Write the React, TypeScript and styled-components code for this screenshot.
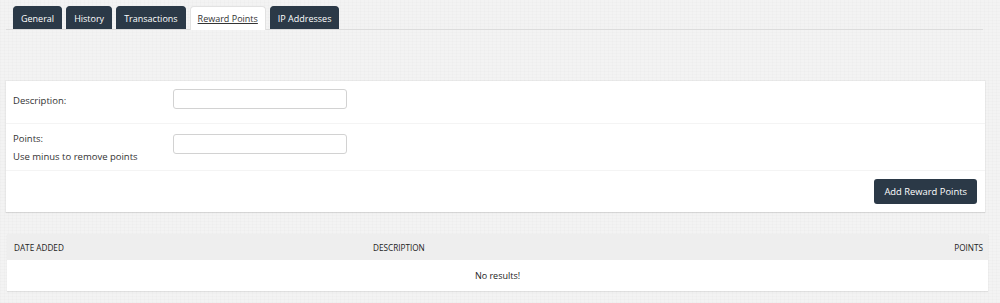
import React from "react";
import styled, { createGlobalStyle } from "styled-components";

const GlobalStyle = createGlobalStyle`
  html, body {
    margin: 0;
    padding: 0;
  }
  body {
    font-family: 'Open Sans', 'Liberation Sans', sans-serif;
    color: #333;
    background-color: #f3f3f3;
    background-image:
      repeating-linear-gradient(0deg, rgba(0,0,0,0.012) 0px, rgba(0,0,0,0.012) 1px, transparent 1px, transparent 3px),
      repeating-linear-gradient(90deg, rgba(0,0,0,0.012) 0px, rgba(0,0,0,0.012) 1px, transparent 1px, transparent 4px);
  }
`;

const Page = styled.div`
  width: 1000px;
  height: 303px;
  box-sizing: border-box;
  padding: 6px 15px 0 6px;
  overflow: hidden;
`;

const TabBar = styled.ul`
  display: flex;
  gap: 4px;
  margin: 0 2px 0 0;
  padding: 0 0 0 7px;
  list-style: none;
  border-bottom: 1px solid #dcdcdc;
`;

const Tab = styled.li<{ $active?: boolean }>`
  height: ${(p) => (p.$active ? "23px" : "22px")};
  padding: 0 7px;
  display: flex;
  align-items: center;
  border-radius: 4px 4px 0 0;
  font-size: 9px;
  background: ${(p) => (p.$active ? "#ffffff" : "#2b3947")};
  color: ${(p) => (p.$active ? "#333" : "#fff")};
  text-decoration: ${(p) => (p.$active ? "underline" : "none")};
  border: 1px solid ${(p) => (p.$active ? "#e2e2e2" : "#2b3947")};
  border-bottom: none;
  margin-bottom: ${(p) => (p.$active ? "-1px" : "0")};
`;

const FormPanel = styled.div`
  margin-top: 51px;
  background: #fff;
  box-shadow: 0 1px 1px rgba(0, 0, 0, 0.08), 0 0 0 1px rgba(0, 0, 0, 0.03);
`;

const FormRow = styled.div<{ $h: number; $top: number }>`
  display: flex;
  align-items: flex-start;
  height: ${(p) => p.$h}px;
  box-sizing: border-box;
  padding: ${(p) => p.$top}px 6px 0 7px;
  border-bottom: 1px solid #f4f4f4;
`;

const Label = styled.div<{ $shift: number }>`
  width: 160px;
  font-size: 9.5px;
  line-height: 18px;
  margin-top: ${(p) => p.$shift}px;
`;

const Input = styled.input`
  width: 174px;
  height: 20px;
  box-sizing: border-box;
  border: 1px solid #d2d2d2;
  border-radius: 3px;
  background: #fff;
  margin: 0;
`;

const ButtonRow = styled.div`
  display: flex;
  justify-content: flex-end;
  height: 41px;
  box-sizing: border-box;
  padding: 8px 8px 0 0;
`;

const Button = styled.button`
  height: 25px;
  padding: 0 10px;
  border: none;
  border-radius: 3px;
  background: #2b3947;
  color: #fff;
  font-family: 'Open Sans', 'Liberation Sans', sans-serif;
  font-size: 9.4px;
`;

const Table = styled.table`
  margin: 22px -3px 0 1px;
  width: calc(100% + 2px);
  border-collapse: collapse;
  background: #fff;
  box-shadow: 0 1px 1px rgba(0, 0, 0, 0.08);
  font-size: 8.2px;
  color: #222;
`;

const Th = styled.th<{ $align?: string }>`
  height: 26px;
  padding: 0 5px 0 7px;
  background: #eeeeee;
  font-weight: normal;
  text-transform: uppercase;
  text-align: ${(p) => p.$align || "left"};
`;

const Empty = styled.td`
  height: 29px;
  text-align: center;
  font-size: 9px;
`;

export default function App() {
  const tabs = ["General", "History", "Transactions", "Reward Points", "IP Addresses"];
  return (
    <Page>
      <GlobalStyle />
      <TabBar>
        {tabs.map((t) => (
          <Tab key={t} $active={t === "Reward Points"}>
            {t}
          </Tab>
        ))}
      </TabBar>

      <FormPanel>
        <FormRow $h={43} $top={8}>
          <Label $shift={3}>Description:</Label>
          <Input type="text" />
        </FormRow>
        <FormRow $h={47} $top={10}>
          <Label $shift={-4}>
            Points:
            <br />
            Use minus to remove points
          </Label>
          <Input type="text" />
        </FormRow>
        <ButtonRow>
          <Button>Add Reward Points</Button>
        </ButtonRow>
      </FormPanel>

      <Table>
        <thead>
          <tr>
            <Th style={{ width: "347px" }}>Date Added</Th>
            <Th>Description</Th>
            <Th $align="right">Points</Th>
          </tr>
        </thead>
        <tbody>
          <tr>
            <Empty colSpan={3}>No results!</Empty>
          </tr>
        </tbody>
      </Table>
    </Page>
  );
}
